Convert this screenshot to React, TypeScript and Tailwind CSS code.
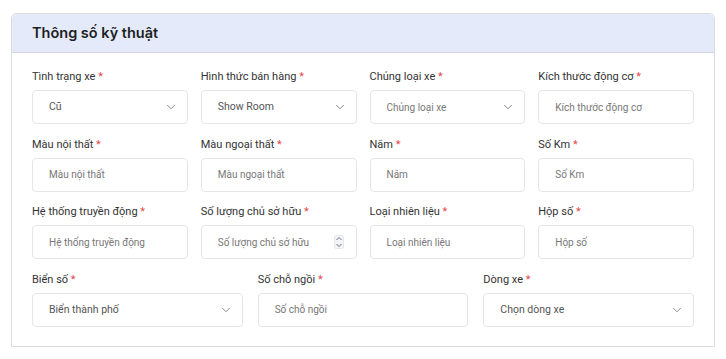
import React from 'react';
import { ChevronDown } from 'lucide-react';

type Field = { label: string; value: string; kind: 'select' | 'input' | 'number'; filled?: boolean };

const ROWS: Field[][] = [
  [
    { label: 'Tình trạng xe', value: 'Cũ', kind: 'select', filled: true },
    { label: 'Hình thức bán hàng', value: 'Show Room', kind: 'select', filled: true },
    { label: 'Chủng loại xe', value: 'Chủng loại xe', kind: 'select' },
    { label: 'Kích thước động cơ', value: 'Kích thước động cơ', kind: 'input' },
  ],
  [
    { label: 'Màu nội thất', value: 'Màu nội thất', kind: 'input' },
    { label: 'Màu ngoại thất', value: 'Màu ngoại thất', kind: 'input' },
    { label: 'Năm', value: 'Năm', kind: 'input' },
    { label: 'Số Km', value: 'Số Km', kind: 'input' },
  ],
  [
    { label: 'Hệ thống truyền động', value: 'Hệ thống truyền động', kind: 'input' },
    { label: 'Số lượng chủ sở hữu', value: 'Số lượng chủ sở hữu', kind: 'number' },
    { label: 'Loại nhiên liệu', value: 'Loại nhiên liệu', kind: 'input' },
    { label: 'Hộp số', value: 'Hộp số', kind: 'input' },
  ],
];

const LAST_ROW: Field[] = [
  { label: 'Biển số', value: 'Biển thành phố', kind: 'select', filled: true },
  { label: 'Số chỗ ngồi', value: 'Số chỗ ngồi', kind: 'input' },
  { label: 'Dòng xe', value: 'Chọn dòng xe', kind: 'select', filled: true },
];

function Spinner() {
  return (
    <svg width="10" height="14" viewBox="0 0 10 14" className="text-gray-500 mr-[3px]">
      <rect x="0.5" y="0.5" width="9" height="13" rx="2" fill="#f3f4f6" stroke="#e5e7eb" />
      <path d="M2.5 5 L5 2.5 L7.5 5" fill="none" stroke="currentColor" strokeWidth="1" />
      <path d="M2.5 9 L5 11.5 L7.5 9" fill="none" stroke="currentColor" strokeWidth="1" />
    </svg>
  );
}

function FormField({ f }: { f: Field }) {
  return (
    <div className="flex flex-col min-w-0">
      <div className="h-[18px] mb-1 text-[11px] leading-[18px] text-[#333]">
        {f.label} <span className="text-[#e5484d]">*</span>
      </div>
      <div className="h-[34px] flex items-center justify-between pl-4 pr-[9px] border border-[#e4e6ea] rounded-[4px] bg-white">
        <span className={f.filled ? 'text-[10.5px] text-[#555]' : 'text-[10px] text-[#777]'}>{f.value}</span>
        {f.kind === 'select' && <ChevronDown className="w-[14px] h-[14px] text-[#666]" strokeWidth={1.3} />}
        {f.kind === 'number' && <Spinner />}
      </div>
    </div>
  );
}

export default function App() {
  return (
    <div className="w-[726px] h-[359px] bg-white pt-[13px] pl-[11px] font-['Roboto',sans-serif]">
      <div className="w-[704px] h-[334px] border border-[#dcdcdc] rounded-t-[5px] bg-white">
        {/* Header */}
        <div className="h-[39px] flex items-center px-5 bg-[#e5eafa] border-b border-[#d4d7de] rounded-t-[5px]">
          <h2 className="font-['Inter',sans-serif] font-semibold text-[14.5px] text-[#1d1f24]">Thông số kỹ thuật</h2>
        </div>

        {/* Body */}
        <div className="px-5 pt-[15px] flex flex-col gap-[11.5px]">
          {ROWS.map((row, i) => (
            <div key={i} className="grid grid-cols-4 gap-x-[13px]">
              {row.map(f => <FormField key={f.label} f={f} />)}
            </div>
          ))}
          <div className="grid grid-cols-3 gap-x-[15px]">
            {LAST_ROW.map(f => <FormField key={f.label} f={f} />)}
          </div>
        </div>
      </div>
    </div>
  );
}
